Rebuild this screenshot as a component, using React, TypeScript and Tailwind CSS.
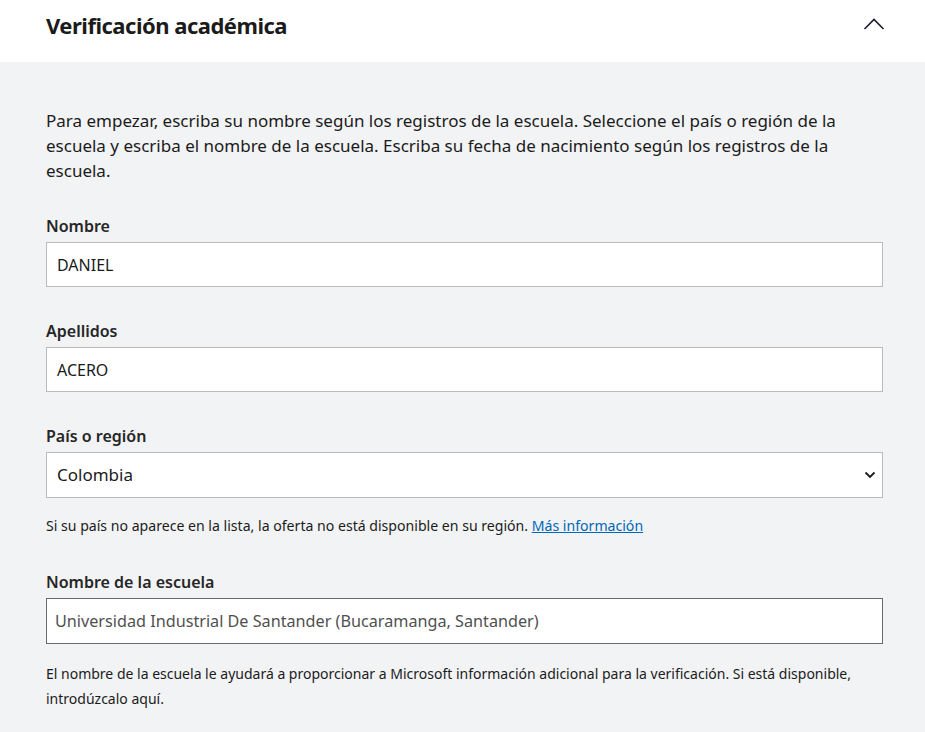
import React from "react";

const font = { fontFamily: '"Segoe UI", "Noto Sans", "Open Sans", sans-serif' };

function Label({ children }: { children: React.ReactNode }) {
  return (
    <div className="text-[16px] leading-[20px] font-semibold text-[#262626] mb-[6px]">
      {children}
    </div>
  );
}

export default function App() {
  return (
    <div className="w-[925px] h-[732px] overflow-hidden bg-[#f2f3f5] text-[#1b1b1b]" style={font}>
      <div className="bg-white h-[62px] flex items-center justify-between pl-[46px] pr-[40px]">
        <h2 className="text-[22px] font-bold leading-none text-[#1b1b1b] -mt-[12px] tracking-[-0.5px]">
          Verificación académica
        </h2>
        <svg width="22" height="14" viewBox="0 0 22 14" className="-mt-[14px]">
          <path d="M1.5 12 L11 2.5 L20.5 12" fill="none" stroke="#1b1b2e" strokeWidth="1.6" />
        </svg>
      </div>
      <div className="px-[46px] pr-[42px] pt-[46px]">
        <p className="text-[17px] leading-[25px]">
          Para empezar, escriba su nombre según los registros de la escuela. Seleccione el país o región de la
          escuela y escriba el nombre de la escuela. Escriba su fecha de nacimiento según los registros de la
          escuela.
        </p>

        <div className="mt-[33px]">
          <Label>Nombre</Label>
          <div className="h-[45px] bg-white border border-[#bbbbbb] flex items-center px-[10px] text-[16px]">
            DANIEL
          </div>
        </div>

        <div className="mt-[34px]">
          <Label>Apellidos</Label>
          <div className="h-[45px] bg-white border border-[#bbbbbb] flex items-center px-[10px] text-[16px]">
            ACERO
          </div>
        </div>

        <div className="mt-[34px]">
          <Label>País o región</Label>
          <div className="h-[46px] bg-white border border-[#bbbbbb] flex items-center justify-between pl-[10px] pr-[6px] text-[17px]">
            <span>Colombia</span>
            <svg width="12" height="8" viewBox="0 0 12 8">
              <path d="M1.5 1.5 L6 6 L10.5 1.5" fill="none" stroke="#1b1b1b" strokeWidth="1.8" />
            </svg>
          </div>
          <p className="mt-[18px] text-[14.1px] leading-[20px]">
            Si su país no aparece en la lista, la oferta no está disponible en su región.{" "}
            <a className="text-[#0067b8] underline" href="#">
              Más información
            </a>
          </p>
        </div>

        <div className="mt-[36px]">
          <Label>Nombre de la escuela</Label>
          <div className="h-[46px] bg-white border border-[#6b6b6b] flex items-center px-[8px] text-[16.2px] text-[#505050]">
            Universidad Industrial De Santander (Bucaramanga, Santander)
          </div>
          <p className="mt-[17px] text-[14px] leading-[25px]">
            El nombre de la escuela le ayudará a proporcionar a Microsoft información adicional para la verificación. Si está disponible,
            introdúzcalo aquí.
          </p>
        </div>
      </div>
    </div>
  );
}
